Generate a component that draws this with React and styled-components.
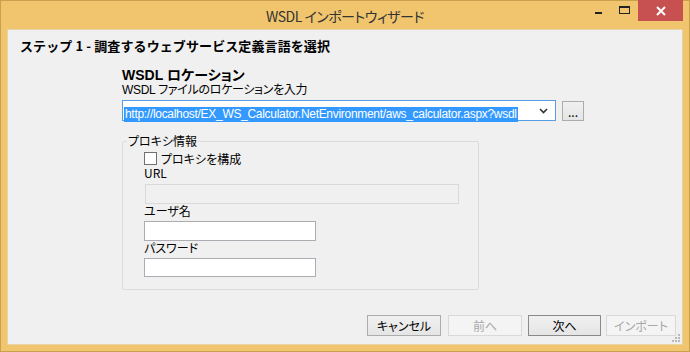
import styled, { createGlobalStyle } from "styled-components";

const GlobalStyle = createGlobalStyle`
  html, body {
    margin: 0;
    padding: 0;
    background: #f1c56d;
  }
  * {
    box-sizing: border-box;
  }
`;

const jp = `"Noto Sans CJK JP", "Liberation Sans", sans-serif`;
const latinFirst = `"Liberation Sans", "Noto Sans CJK JP", sans-serif`;

const Window = styled.div`
  width: 690px;
  height: 352px;
  border: 1px solid #c9a04e;
  background: #f1c56d;
  display: flex;
  flex-direction: column;
  font-family: ${jp};
  color: #000;
`;

const TitleBar = styled.div`
  height: 28px;
  display: grid;
  grid-template-columns: 1fr auto 1fr;
  align-items: start;
`;

const Title = styled.div`
  grid-column: 2;
  font-size: 14px;
  line-height: 30px;
  color: #333;
  font-feature-settings: "palt";
  letter-spacing: -0.5px;
`;

const Controls = styled.div`
  grid-column: 3;
  justify-self: end;
  display: flex;
  align-items: flex-start;
  margin-top: -1px;
  margin-right: 6px;
`;

const ControlButton = styled.div`
  width: ${(p) => p.$w}px;
  height: 21px;
  display: flex;
  align-items: center;
  justify-content: center;
  background: ${(p) => (p.$close ? "#c75050" : "transparent")};
`;

const Client = styled.div`
  flex: 1;
  margin: 0 6px 6px 6px;
  border: 1px solid #e6d3a6;
  background: #f0f0f0;
  display: flex;
  flex-direction: column;
  position: relative;
`;

const Header = styled.div`
  height: 32px;
  padding-left: 12px;
  font-size: 13px;
  font-weight: bold;
  line-height: 32px;
  letter-spacing: 0.1px;
`;

const Body = styled.div`
  padding: 5px 0 0 114px;
  display: flex;
  flex-direction: column;
  align-items: flex-start;
`;

const SectionTitle = styled.div`
  font-family: ${latinFirst};
  font-size: 14px;
  font-weight: bold;
  line-height: 16px;
  font-feature-settings: "palt";
`;

const Hint = styled.div`
  font-family: ${latinFirst};
  font-size: 12px;
  line-height: 14px;
  font-feature-settings: "palt";
  letter-spacing: -0.3px;
`;

const LocationRow = styled.div`
  margin-top: 3px;
  display: flex;
  align-items: center;
  gap: 6px;
`;

const Combo = styled.div`
  width: 434px;
  height: 21px;
  border: 1px solid #569de5;
  background: #fff;
  display: flex;
  align-items: center;
  padding: 0 1px;
`;

const Selected = styled.span`
  flex: 1;
  min-width: 0;
  overflow: hidden;
`;

const SelectedText = styled.span`
  background: #3399ff;
  color: #fff;
  font-family: "Liberation Sans", Arial, sans-serif;
  font-size: 12px;
  letter-spacing: -0.3px;
  line-height: 15px;
  padding: 0 1px;
  white-space: nowrap;
  display: inline-block;
`;

const ComboArrow = styled.div`
  width: 17px;
  display: flex;
  justify-content: center;
  margin-right: 2px;
`;

const Button = styled.div`
  width: ${(p) => p.$w}px;
  height: ${(p) => p.$h || 21}px;
  border: 1px solid ${(p) => (p.$disabled ? "#d9d9d9" : p.$default ? "#8a8a8a" : "#acacac")};
  background: ${(p) =>
    p.$disabled ? "#f4f4f4" : "linear-gradient(#f0f0f0, #e5e5e5)"};
  color: ${(p) => (p.$disabled ? "#a8a8a8" : "#000")};
  font-size: 12px;
  line-height: 19px;
  text-align: center;
  font-feature-settings: "palt";
`;

const Group = styled.fieldset`
  margin: 13px 0 0 0;
  width: 357px;
  border: 1px solid #dcdcdc;
  border-radius: 2px;
  padding: 3px 10px 12px 21px;
  display: flex;
  flex-direction: column;
  align-items: flex-start;
`;

const Legend = styled.legend`
  font-size: 12px;
  line-height: 14px;
  padding: 0 1px;
  margin-left: -17px;
  font-feature-settings: "palt";
`;

const CheckRow = styled.label`
  display: flex;
  align-items: center;
  gap: 4px;
  height: 15px;
  font-size: 12px;
  font-feature-settings: "palt";
`;

const Box = styled.span`
  width: 13px;
  height: 13px;
  border: 1px solid #707070;
  background: #fff;
`;

const FieldLabel = styled.div`
  font-size: 12px;
  line-height: 14px;
  font-feature-settings: "palt";
  margin-top: ${(p) => p.$top || 0}px;
`;

const Input = styled.div`
  width: ${(p) => p.$w}px;
  height: ${(p) => p.$h || 20}px;
  margin-top: ${(p) => p.$top || 3}px;
  margin-left: ${(p) => p.$left || 0}px;
  border: 1px solid ${(p) => (p.$disabled ? "#d9d9d9" : "#abadb3")};
  background: ${(p) => (p.$disabled ? "#f0f0f0" : "#fff")};
`;

const Footer = styled.div`
  margin-top: auto;
  display: flex;
  justify-content: flex-end;
  padding: 0 6px 8px 0;
`;

const Grip = styled.svg`
  position: absolute;
  right: 1px;
  bottom: 1px;
`;

const buttons = [
  { label: "キャンセル", w: 74, gap: 0 },
  { label: "前へ", w: 74, gap: 7, disabled: true },
  { label: "次へ", w: 73, gap: 6, def: true },
  { label: "インポート", w: 70, gap: 5, disabled: true },
];

export default function App() {
  return (
    <>
      <GlobalStyle />
      <Window>
        <TitleBar>
          <Title>WSDL インポートウィザード</Title>
          <Controls>
            <ControlButton $w={27}>
              <svg width="8" height="10" viewBox="0 0 8 10">
                <rect x="0" y="6" width="7" height="2" fill="#222" />
              </svg>
            </ControlButton>
            <ControlButton $w={26}>
              <svg width="12" height="10" viewBox="0 0 12 10">
                <rect x="0.5" y="0.5" width="10" height="7" fill="none" stroke="#222" />
                <rect x="0" y="0" width="11" height="2" fill="#222" />
              </svg>
            </ControlButton>
            <ControlButton $w={45} $close>
              <svg width="10" height="10" viewBox="0 0 10 10">
                <path d="M1 1 L9 9 M9 1 L1 9" stroke="#fff" strokeWidth="2" />
              </svg>
            </ControlButton>
          </Controls>
        </TitleBar>
        <Client>
          <Header>ステップ 1 - 調査するウェブサービス定義言語を選択</Header>
          <Body>
            <SectionTitle>WSDL ロケーション</SectionTitle>
            <Hint>WSDL ファイルのロケーションを入力</Hint>
            <LocationRow>
              <Combo>
                <Selected>
                  <SelectedText>
                    http://localhost/EX_WS_Calculator.NetEnvironment/aws_calculator.aspx?wsdl
                  </SelectedText>
                </Selected>
                <ComboArrow>
                  <svg width="9" height="6" viewBox="0 0 9 6">
                    <path d="M1 1 L4.5 4.5 L8 1" fill="none" stroke="#333" strokeWidth="1.6" />
                  </svg>
                </ComboArrow>
              </Combo>
              <Button $w={22} $h={20}>...</Button>
            </LocationRow>
            <Group>
              <Legend>プロキシ情報</Legend>
              <CheckRow>
                <Box />
                プロキシを構成
              </CheckRow>
              <FieldLabel>URL</FieldLabel>
              <Input $w={314} $top={4} $left={1} $disabled />
              <FieldLabel>ユーザ名</FieldLabel>
              <Input $w={172} />
              <FieldLabel>パスワード</FieldLabel>
              <Input $w={172} $h={19} />
            </Group>
          </Body>
          <Footer>
            {buttons.map((b) => (
              <Button
                key={b.label}
                $w={b.w}
                $disabled={b.disabled}
                $default={b.def}
                style={{ marginLeft: b.gap }}
              >
                {b.label}
              </Button>
            ))}
          </Footer>
          <Grip width="10" height="10" viewBox="0 0 10 10">
            {[
              [8, 2],
              [5, 5],
              [8, 5],
              [2, 8],
              [5, 8],
              [8, 8],
            ].map(([x, y]) => (
              <rect key={`${x}-${y}`} x={x - 1} y={y - 1} width="2" height="2" fill="#b9b9b9" />
            ))}
          </Grip>
        </Client>
      </Window>
    </>
  );
}
